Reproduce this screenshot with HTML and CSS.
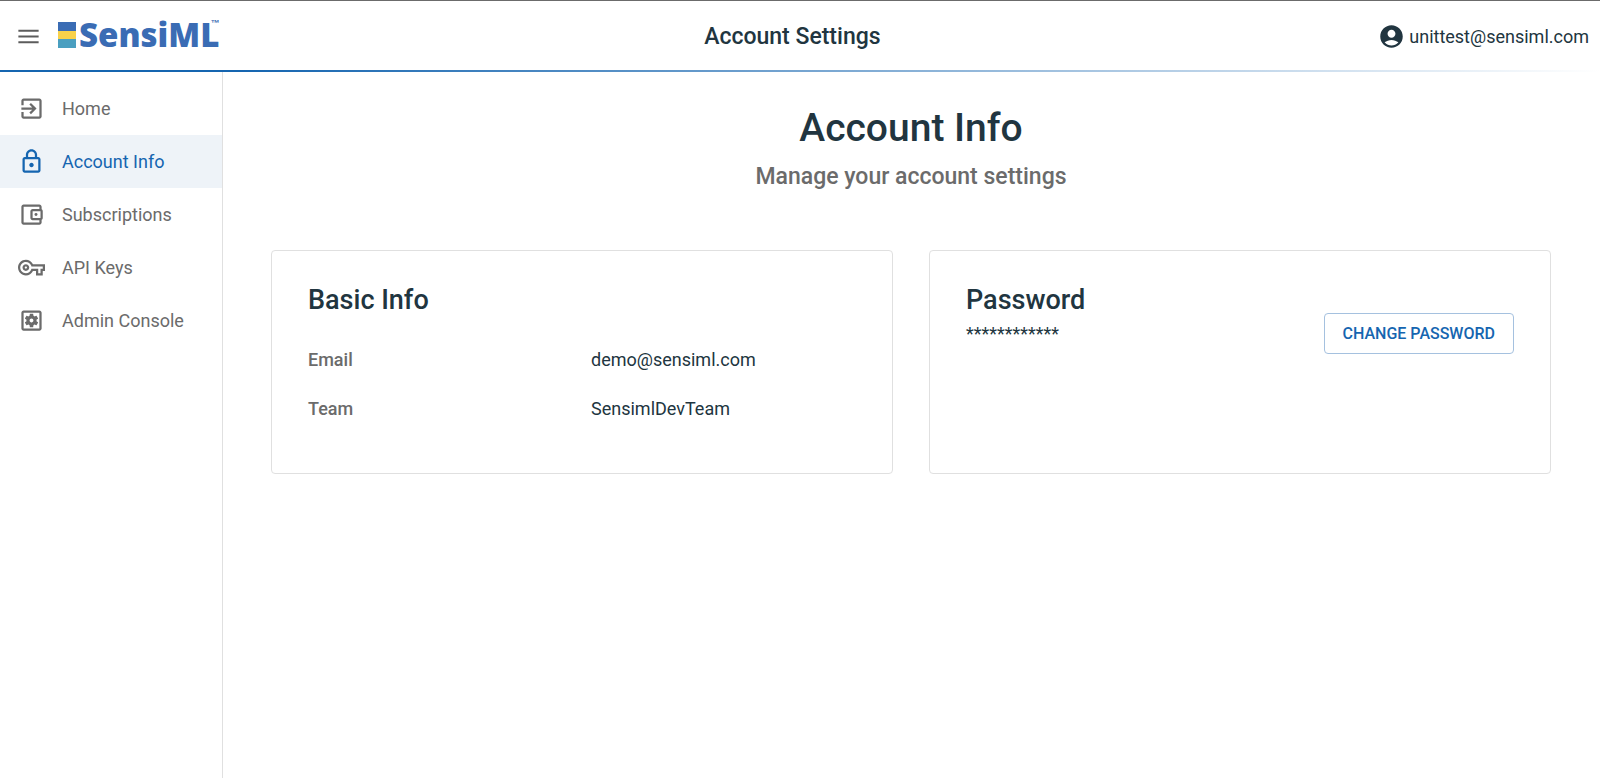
FILE: index.html
```html
<!DOCTYPE html>
<html lang="en">
<head>
<meta charset="utf-8">
<title>Account Settings</title>
<link rel="stylesheet" href="styles.css">
</head>
<body>
<header class="topbar">
  <button class="menu-button" type="button" aria-label="Toggle menu">
    <svg class="icon" viewBox="0 0 24 24"><path d="M3 18h18v-1.700H3V18zm0-5.200h18v-1.700H3v1.700zM3 6v1.700h18V6H3z"/></svg>
  </button>
  <a class="logo" href="#">
    <span class="logo-mark"><span class="bar bar-blue"></span><span class="bar bar-yellow"></span><span class="bar bar-teal"></span></span>
    <span class="logo-text">SensiML</span><span class="logo-tm">™</span>
  </a>
  <p class="topbar-title">Account Settings</p>
  <button class="user" type="button">
    <svg class="icon" viewBox="0 0 24 24"><path d="M12 2C6.480 2 2 6.480 2 12s4.480 10 10 10 10-4.480 10-10S17.520 2 12 2zm0 4c1.930 0 3.500 1.570 3.500 3.500S13.930 13 12 13s-3.500-1.570-3.500-3.500S10.070 6 12 6zm0 14c-2.030 0-4.430-.820-6.140-2.880C7.550 15.800 9.680 15 12 15s4.450.800 6.140 2.120C16.430 19.180 14.030 20 12 20z"/></svg>
    <span>unittest@sensiml.com</span>
  </button>
</header>
<div class="layout">
  <nav class="sidebar">
    <a class="nav-item" href="#"><svg class="icon" viewBox="0 0 24 24"><path d="M10.090 15.590L11.500 17l5-5-5-5-1.410 1.410L12.670 11H3v2h9.670l-2.580 2.590zM19 3H5c-1.110 0-2 .9-2 2v4h2V5h14v14H5v-4H3v4c0 1.100.890 2 2 2h14c1.100 0 2-.9 2-2V5c0-1.100-.9-2-2-2z"/></svg><span>Home</span></a>
    <a class="nav-item active" href="#" aria-current="page"><svg class="icon" viewBox="0 0 24 24"><path d="M18 8h-1V6c0-2.760-2.240-5-5-5S7 3.240 7 6v2H6c-1.100 0-2 .9-2 2v10c0 1.100.9 2 2 2h12c1.100 0 2-.9 2-2V10c0-1.100-.9-2-2-2zM9 6c0-1.660 1.340-3 3-3s3 1.340 3 3v2H9V6zm9 14H6V10h12v10zm-6-3c1.100 0 2-.9 2-2s-.9-2-2-2-2 .9-2 2 .9 2 2 2z"/></svg><span>Account Info</span></a>
    <a class="nav-item" href="#"><svg class="icon" viewBox="0 0 24 24"><path d="M21 7.280V5c0-1.100-.9-2-2-2H5c-1.110 0-2 .9-2 2v14c0 1.100.890 2 2 2h14c1.100 0 2-.9 2-2v-2.280c.590-.350 1-.980 1-1.720V9c0-.740-.410-1.370-1-1.720zM20 9v6h-7V9h7zM5 19V5h14v2h-6c-1.100 0-2 .9-2 2v6c0 1.100.9 2 2 2h6v2H5z"/><circle cx="16" cy="12" r="1.300"/></svg><span>Subscriptions</span></a>
    <a class="nav-item" href="#"><svg class="icon" viewBox="0 0 24 24"><path d="M22 19h-6v-4h-2.680c-1.140 2.420-3.600 4-6.320 4-3.860 0-7-3.140-7-7s3.140-7 7-7c2.720 0 5.170 1.580 6.320 4H24v6h-2v4zm-4-2h2v-4h2v-2H11.940l-.230-.670C11.010 8.340 9.110 7 7 7c-2.760 0-5 2.240-5 5s2.240 5 5 5c2.110 0 4.010-1.340 4.710-3.330l.230-.670H18v4zM7 15c-1.650 0-3-1.350-3-3s1.350-3 3-3 3 1.350 3 3-1.350 3-3 3zm0-4c-.550 0-1 .450-1 1s.450 1 1 1 1-.450 1-1-.450-1-1-1z"/></svg><span>API Keys</span></a>
    <a class="nav-item" href="#"><svg class="icon" viewBox="0 0 24 24"><path d="M19 3H5c-1.110 0-2 .9-2 2v14c0 1.100.890 2 2 2h14c1.110 0 2-.9 2-2V5c0-1.100-.890-2-2-2zm0 16H5V5h14v14z"/><path d="M6.210 13.970l1.200 2.070c.08.130.230.180.370.130l1.490-.600c.310.240.640.440 1.010.590l.220 1.590c.03.140.150.250.300.250h2.400c.150 0 .270-.110.300-.260l.220-1.590c.360-.150.700-.350 1.010-.590l1.490.600c.140.050.290 0 .370-.130l1.200-2.070c.08-.130.040-.290-.070-.390l-1.270-.990c.03-.190.040-.390.040-.580 0-.200-.020-.390-.040-.590l1.270-.990c.110-.090.150-.260.070-.390l-1.200-2.070c-.080-.130-.230-.180-.370-.130l-1.490.600c-.310-.240-.640-.440-1.010-.590l-.220-1.590c-.030-.140-.150-.250-.300-.250h-2.400c-.150 0-.270.110-.300.260l-.220 1.590c-.360.150-.710.340-1.010.580l-1.490-.600c-.140-.050-.290 0-.370.130l-1.200 2.070c-.080.130-.040.290.070.390l1.270.990c-.030.200-.050.390-.050.590 0 .200.020.390.040.590l-1.270.990c-.110.100-.140.260-.060.390zM12 10.290c.940 0 1.710.770 1.710 1.710s-.770 1.710-1.710 1.710-1.710-.770-1.710-1.710.770-1.710 1.710-1.710z"/></svg><span>Admin Console</span></a>
  </nav>
  <main class="content">
    <h1 class="page-title">Account Info</h1>
    <p class="page-subtitle">Manage your account settings</p>
    <div class="cards">
      <section class="card">
        <h2 class="card-title">Basic Info</h2>
        <dl class="details">
          <dt>Email</dt><dd>demo@sensiml.com</dd>
          <dt>Team</dt><dd>SensimlDevTeam</dd>
        </dl>
      </section>
      <section class="card password-card">
        <div>
          <h2 class="card-title">Password</h2>
          <p class="password-mask">************</p>
        </div>
        <button class="outline-button" type="button">CHANGE PASSWORD</button>
      </section>
    </div>
  </main>
</div>
</body>
</html>
```
FILE: styles.css
```css
* {
  box-sizing: border-box;
}

body {
  margin: 0;
  min-height: 100vh;
  display: flex;
  flex-direction: column;
  background: #fff;
  color: #213540;
  font-family: Roboto, "Liberation Sans", sans-serif;
  font-size: 18px;
  line-height: 24px;
}

h1, h2, p, dl, dd {
  margin: 0;
}

h1, h2 {
  font-weight: 500;
}

a {
  text-decoration: none;
}

button {
  font: inherit;
  color: inherit;
  background: none;
  border: 0;
  padding: 0;
  cursor: pointer;
}

.icon {
  width: 27px;
  height: 27px;
  flex: none;
  display: block;
  fill: currentColor;
}

.topbar {
  display: flex;
  align-items: center;
  height: 72px;
  padding: 0 11px 0 15px;
  border-top: 1px solid #6b6b6b;
  background: linear-gradient(to right, #1565b0, #1565b0 15%, #fff) bottom / 100% 2px no-repeat;
}

.menu-button {
  color: #5c5c5c;
}

.logo {
  position: relative;
  display: flex;
  align-items: center;
  margin-left: 16px;
  padding-bottom: 4px;
  color: #3a6cb4;
}

.logo-mark {
  display: flex;
  flex-direction: column;
  width: 18px;
}

.bar-blue {
  height: 9px;
  background: #3a6cb4;
}

.bar-yellow {
  height: 8px;
  background: #f8d24b;
}

.bar-teal {
  height: 9px;
  background: #4a9fc0;
}

.logo-text {
  margin-left: 3px;
  font-family: "Open Sans", sans-serif;
  font-size: 33px;
  font-weight: 800;
  line-height: 38px;
}

/* Trademark sits in the open corner of the final letter */
.logo-tm {
  position: absolute;
  top: 3px;
  right: 0;
  font-family: "Liberation Sans", sans-serif;
  font-size: 9px;
  font-weight: 700;
  line-height: 9px;
}

.topbar-title {
  flex: 1;
  text-align: center;
  font-size: 23px;
  font-weight: 500;
}

.user {
  display: flex;
  align-items: center;
  gap: 4px;
  padding-left: 13px;
}

.layout {
  flex: 1;
  display: flex;
}

.sidebar {
  flex: none;
  width: 223px;
  padding-top: 10px;
  border-right: 1px solid #e0e0e0;
}

.nav-item {
  display: flex;
  align-items: center;
  gap: 17px;
  height: 53px;
  padding-left: 18px;
  color: #6b6b6b;
}

.nav-item.active {
  background: #eef3f8;
  color: #1565b0;
}

.content {
  flex: 1;
  padding: 32px 49px 32px 48px;
}

.page-title {
  text-align: center;
  font-size: 39px;
  line-height: 48px;
}

.page-subtitle {
  margin-top: 9px;
  text-align: center;
  color: #6b6b6b;
  font-size: 23px;
  font-weight: 500;
  line-height: 32px;
}

.cards {
  display: grid;
  grid-template-columns: 1fr 1fr;
  gap: 36px;
  margin-top: 57px;
}

.card {
  padding: 33px 36px 52px;
  border: 1px solid #e0e0e0;
  border-radius: 4px;
}

.card-title {
  font-size: 27px;
  line-height: 32px;
}

.details {
  display: grid;
  grid-template-columns: 1fr 1fr;
  gap: 25px 18px;
  margin-top: 32px;
}

.details dt {
  color: #6b6b6b;
  font-weight: 500;
}

.password-card {
  display: flex;
  justify-content: space-between;
  align-items: flex-start;
}

.password-mask {
  margin-top: 6px;
}

.outline-button {
  height: 41px;
  margin-top: 29px;
  padding: 0 18px;
  border: 1px solid #a5c1df;
  border-radius: 4px;
  color: #1565b0;
  font-size: 16px;
  font-weight: 500;
}
```
